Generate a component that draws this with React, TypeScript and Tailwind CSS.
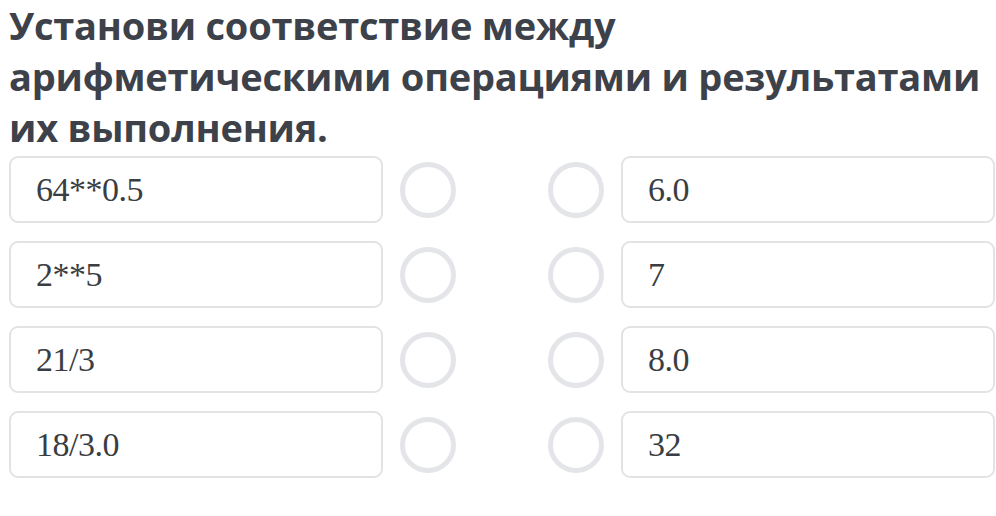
import React from 'react'

const leftItems = ['64**0.5', '2**5', '21/3', '18/3.0']
const rightItems = ['6.0', '7', '8.0', '32']

function Card({ text }: { text: string }) {
  return (
    <div className="h-[67px] w-[374px] rounded-[9px] border-2 border-[#e1e3e5] bg-white flex items-center pl-[25px]">
      <span className="text-[34px] text-[#3a3d42] leading-none tracking-[-0.5px]" style={{ fontFamily: '"Liberation Serif", serif' }}>
        {text}
      </span>
    </div>
  )
}

function Circle() {
  return <div className="w-[56px] h-[56px] rounded-full border-[5px] border-[#e3e5e8] bg-white" />
}

export default function App() {
  return (
    <div className="w-[996px] h-[516px] bg-white overflow-hidden pl-[9px]" style={{ fontFamily: '"Open Sans", sans-serif' }}>
      {/* Title */}
      <h1 className="text-[38px] leading-[51px] font-bold text-[#3d4149] tracking-[-0.22px]">
        Установи соответствие между арифметическими операциями и результатами их выполнения.
      </h1>

      {/* Matching rows */}
      <div className="mt-[3px] flex flex-col gap-[18px]">
        {leftItems.map((l, i) => (
          <div key={i} className="flex items-center">
            <Card text={l} />
            <div className="ml-[17px]">
              <Circle />
            </div>
            <div className="ml-[92px]">
              <Circle />
            </div>
            <div className="ml-[17px]">
              <Card text={rightItems[i]} />
            </div>
          </div>
        ))}
      </div>
    </div>
  )
}
